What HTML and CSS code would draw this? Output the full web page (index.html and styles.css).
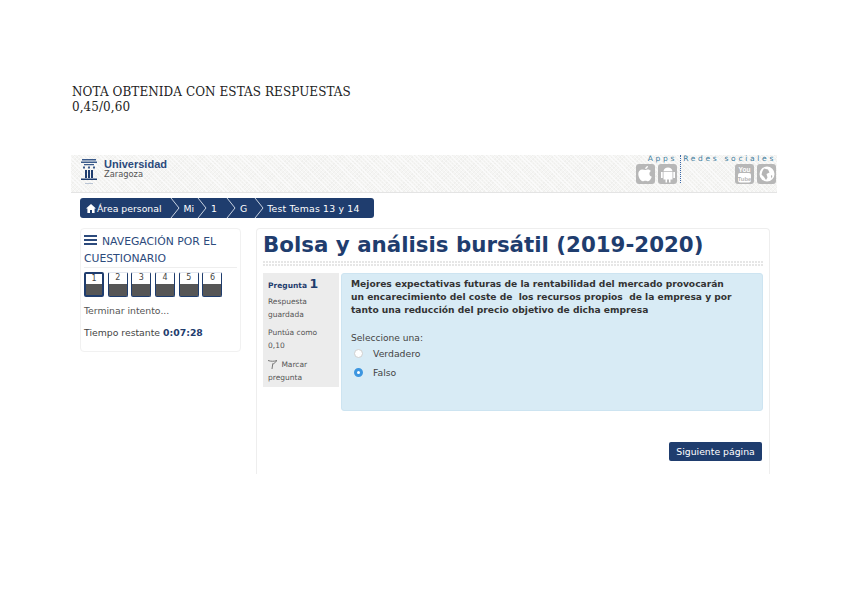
FILE: index.html
```html
<!DOCTYPE html>
<html lang="es">
<head>
<meta charset="utf-8">
<title>Nota obtenida</title>
<link rel="stylesheet" href="styles.css">
</head>
<body>
<div class="note">
  <div>NOTA OBTENIDA CON ESTAS RESPUESTAS</div>
  <div>0,45/0,60</div>
</div>
<div class="shot">
  <header class="top">
    <div class="brand">
      <svg class="crest" width="18" height="28" viewBox="0 0 18 28">
        <path d="M2 1h14v1.500H2zM1 3.500h16V5H1zM4 6h10v1.300H4z" fill="#3a5a8a"/>
        <path d="M3 8.500h2v2H3zM8 8.500h2v2H8zM13 8.500h2v2h-2z" fill="#3a5a8a"/>
        <path d="M5 12h2v8H5zM8 12h2v8H8zM11 12h2v8h-2z" fill="#1f3d6e"/>
        <path d="M1 20.500h16V22H1z" fill="#1f3d6e"/>
        <path d="M5 25h8v1H5z" fill="#b9c4d4"/>
      </svg>
      <div class="brandtext">
        <div class="uni">Universidad</div>
        <div class="zar">Zaragoza</div>
      </div>
    </div>
    <div class="links">
      <div class="group apps">
        <div class="label">Apps</div>
        <div class="icons">
          <span class="ico"><svg width="14" height="16" viewBox="0 0 14 16"><path d="M10 0c.1 1.500-1.300 3-2.800 2.900C7.100 1.500 8.500.1 10 0zM7.200 4c.8 0 1.600-.6 2.800-.6 1 0 2.200.5 3 1.600-2.400 1.400-2 4.800.8 5.800-.7 1.900-2.200 4.500-3.700 4.500-1 0-1.500-.6-2.700-.6s-1.700.6-2.700.6C2.800 15.300.3 11.300.3 8 .3 5.200 2.200 3.500 4.200 3.500c1.200 0 2.200.5 3 .5z" fill="#fff"/></svg></span>
          <span class="ico"><svg width="16" height="17" viewBox="0 0 16 17"><path d="M3.500 6h9v7.500h-2V16.500H9v-3H7v3H5.500v-3h-2zM1 6h1.700v6H1zM13.300 6H15v6h-1.700zM3.500 5.300C3.700 3 5.600 1.500 8 1.500s4.300 1.500 4.500 3.800z" fill="#fff"/></svg></span>
        </div>
      </div>
      <div class="group social">
        <div class="label">Redes sociales</div>
        <div class="icons">
          <span class="ico"><svg width="15" height="18" viewBox="0 0 15 18"><text x="7.500" y="6.500" class="yt-you">You</text><rect x="1" y="8" width="13" height="9.500" rx="2" fill="#fff"/><text x="7.500" y="15.500" class="yt-tube">Tube</text></svg></span>
          <span class="ico"><svg width="16" height="16" viewBox="0 0 16 16"><circle cx="8" cy="8" r="7.500" fill="#fff"/><path d="M5 2.500l4 1 1.500 3-3 1.500 1 3.500-1.500 2.500-2-3-2.500-2.500 1-3.500zM12 9l1.500 1-1.500 2.500z" fill="#b5b5b5"/></svg></span>
        </div>
      </div>
    </div>
  </header>
  <nav class="crumbs">
    <span class="crumb home"><svg width="10" height="9" viewBox="0 0 10 9"><path d="M5 0l5 4.500H8.600V9H6V6H4v3H1.400V4.500H0z" fill="#fff"/></svg>Área personal</span>
    <svg class="sep" width="10" height="20" viewBox="0 0 10 20"><path d="M1 0l8 10-8 10" fill="none" stroke="#c9d3e2"/></svg>
    <span class="crumb mi">Mi</span>
    <svg class="sep" width="10" height="20" viewBox="0 0 10 20"><path d="M1 0l8 10-8 10" fill="none" stroke="#c9d3e2"/></svg>
    <span class="crumb one">1</span>
    <svg class="sep" width="10" height="20" viewBox="0 0 10 20"><path d="M1 0l8 10-8 10" fill="none" stroke="#c9d3e2"/></svg>
    <span class="crumb gee">G</span>
    <svg class="sep" width="10" height="20" viewBox="0 0 10 20"><path d="M1 0l8 10-8 10" fill="none" stroke="#c9d3e2"/></svg>
    <span class="crumb last">Test Temas 13 y 14</span>
  </nav>
  <div class="cols">
    <aside class="side">
      <h2 class="side-title"><span class="burger"><i></i><i></i><i></i></span>NAVEGACIÓN POR EL CUESTIONARIO</h2>
      <div class="qnav">
        <span class="q current"><b>1</b></span>
        <span class="q"><b>2</b></span>
        <span class="q"><b>3</b></span>
        <span class="q"><b>4</b></span>
        <span class="q"><b>5</b></span>
        <span class="q"><b>6</b></span>
      </div>
      <div class="finish">Terminar intento...</div>
      <div class="timer">Tiempo restante <strong>0:07:28</strong></div>
    </aside>
    <main class="main">
      <h1 class="title">Bolsa y análisis bursátil (2019-2020)</h1>
      <div class="dots"></div>
      <div class="quiz">
        <div class="info">
          <div class="qno">Pregunta <span>1</span></div>
          <div class="meta">Respuesta guardada</div>
          <div class="meta">Puntúa como 0,10</div>
          <div class="meta flag"><svg width="9" height="10" viewBox="0 0 9 10"><path d="M0 1.500c3 1 6 1 9 0L5.500 5 4.800 4.500 4 10" fill="none" stroke="#777"/></svg> Marcar pregunta</div>
        </div>
        <div class="content">
          <p class="qtext">Mejores expectativas futuras de la rentabilidad del mercado provocarán<br>un encarecimiento del coste de&nbsp; los recursos propios&nbsp; de la empresa y por<br>tanto una reducción del precio objetivo de dicha empresa</p>
          <div class="prompt">Seleccione una:</div>
          <div class="opt"><span class="radio"></span>Verdadero</div>
          <div class="opt"><span class="radio on"></span>Falso</div>
        </div>
      </div>
      <div class="actions"><span class="btn">Siguiente página</span></div>
    </main>
  </div>
</div>
</body>
</html>
```
FILE: styles.css
```css
html, body { margin: 0; padding: 0; background: #fff; }
body { width: 848px; height: 599px; overflow: hidden; font-family: "DejaVu Sans", sans-serif; color: #333; }
.note { padding: 85px 0 0 72px; font-family: "DejaVu Serif", serif; font-size: 12px; line-height: 15px; color: #222; letter-spacing: .07px; }
.shot { width: 706px; margin: 40px 0 0 71px; }
.top { height: 37px; display: flex; justify-content: space-between; border-bottom: 1px solid #e4e4e4; background-color: #f5f5f3; background-image: repeating-linear-gradient(45deg, #fafafa 0 1px, transparent 1px 3px), repeating-linear-gradient(-45deg, #efefed 0 1px, transparent 1px 3px); }
.brand { display: flex; gap: 6px; padding: 3px 0 0 9px; }
.crest { display: block; }
.brandtext { padding-top: 1px; }
.uni { font-family: "Liberation Sans", sans-serif; font-weight: 700; font-size: 11px; line-height: 11px; color: #2c4a7c; }
.zar { font-family: "DejaVu Sans", sans-serif; font-size: 8.300px; line-height: 9px; color: #555; }
.links { display: flex; }
.group { display: flex; flex-direction: column; align-items: flex-end; }
.apps { padding-right: 3px; border-right: 1px dotted #3a68a8; height: 28px; }
.social { width: 96px; padding-right: 1px; box-sizing: border-box; }
.label { font-size: 7.500px; line-height: 8px; height: 8px; letter-spacing: 2.700px; color: #3f7ea0; white-space: nowrap; }
.icons { display: flex; gap: 3.500px; margin-top: 1px; }
.ico { width: 19px; height: 20px; border-radius: 3px; background: #b7b7b7; display: flex; align-items: center; justify-content: center; }
.yt-you { font-family: "Liberation Sans", sans-serif; font-size: 6.500px; font-weight: 700; fill: #fff; text-anchor: middle; }
.yt-tube { font-family: "Liberation Sans", sans-serif; font-size: 6px; font-weight: 700; fill: #b7b7b7; text-anchor: middle; }
.crumbs { width: 294px; height: 20px; margin: 5px 0 0 9px; padding-left: 6px; box-sizing: border-box; display: flex; align-items: center; background: #1f3d6e; border-radius: 3px; color: #fff; font-size: 9.300px; white-space: nowrap; }
.crumb { display: flex; align-items: center; gap: 1px; }
.sep { flex: none; }
.home { margin-right: 8px; }
.mi { margin: 0 3px 0 4px; }
.one { margin: 0 9px 0 4px; }
.gee { margin: 0 7px 0 4px; }
.last { margin-left: 3px; letter-spacing: .2px; }
.cols { display: flex; align-items: flex-start; gap: 15px; margin: 10px 0 0 9px; }
.side { width: 161px; height: 124px; box-sizing: border-box; border: 1px solid #f1f1f1; border-radius: 4px; padding: 4px 3px 0 3px; }
.side-title { margin: 0; font-size: 10.800px; font-weight: 400; line-height: 17px; color: #2c4a7c; height: 34px; border-bottom: 1px solid #eee; }
.burger { display: inline-flex; flex-direction: column; justify-content: space-between; width: 13px; height: 10px; margin: 2px 5px 0 0; vertical-align: top; }
.burger i { display: block; height: 2px; background: #2c4a7c; }
.qnav { display: flex; gap: 3.700px; margin-top: 4px; }
.q { width: 20px; height: 25px; box-sizing: border-box; border: 1px solid #1f3d6e; border-top-color: #e2e6ee; border-radius: 2px; background: linear-gradient(#fff 0 11px, #565656 11px); font-size: 8px; text-align: center; line-height: 10px; color: #444; }
.q b { font-weight: 400; }
.q.current { border: 2px solid #1f3d6e; line-height: 9px; background: linear-gradient(#fff 0 10px, #565656 10px); }
.finish { margin-top: 8px; font-size: 9.300px; line-height: 12px; color: #555; }
.timer { margin-top: 10px; font-size: 9.300px; line-height: 12px; color: #444; }
.timer strong { color: #1f3d6e; }
.main { width: 514px; height: 246px; box-sizing: border-box; border: 1px solid #eee; border-bottom: 0; border-radius: 4px 4px 0 0; padding: 0 6px; }
.title { margin: 0; font-family: "DejaVu Sans", sans-serif; font-size: 21.350px; line-height: 31px; font-weight: 700; color: #1f3d6e; white-space: nowrap; }
.dots { height: 6px; background-color: #fff; background-image: repeating-linear-gradient(90deg, transparent 0 2px, #fff 2px 3px), repeating-linear-gradient(0deg, #e6e6e6 0 2px, #fff 2px 3px); }
.quiz { display: flex; gap: 2px; margin-top: 7px; }
.info { width: 76px; height: 114px; box-sizing: border-box; background: #ececec; padding: 4px 5px; font-size: 7.500px; line-height: 13px; color: #555; }
.qno { font-weight: 700; color: #1f3d6e; margin-bottom: 3px; }
.qno span { font-size: 12.500px; }
.meta { margin-bottom: 5px; }
.flag { padding-top: 1px; }
.flag svg { vertical-align: -2px; margin-right: 2px; }
.content { width: 422px; height: 138px; box-sizing: border-box; background: #d8ebf5; border: 1px solid #cde4f1; border-radius: 3px; padding: 4px 9px; font-size: 9.100px; color: #444; }
.qtext { margin: 0 0 15px; font-weight: 700; line-height: 13px; font-size: 9.150px; white-space: nowrap; color: #333; }
.prompt { line-height: 13px; margin-bottom: -1px; }
.opt { display: flex; align-items: center; height: 19px; font-size: 9.300px; }
.radio { width: 9px; height: 9px; margin: 0 10px 0 3px; border-radius: 50%; background: #fff; border: 1px solid #cfcfcf; box-sizing: border-box; }
.radio.on { background: #fff; border: 3px solid #3d96e0; }
.actions { display: flex; justify-content: flex-end; margin-top: 31px; padding-right: 1px; }
.btn { width: 93px; height: 19px; box-sizing: border-box; background: #1f3d6e; border-radius: 2px; color: #fff; font-size: 9.300px; line-height: 19px; text-align: center; }
```
